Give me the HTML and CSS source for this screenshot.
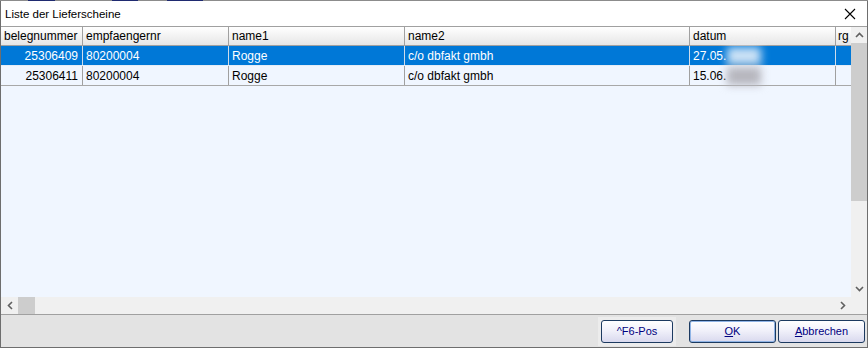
FILE: index.html
```html
<!DOCTYPE html>
<html lang="de">
<head>
    <meta charset="UTF-8">
    <meta name="viewport" content="width=device-width, initial-scale=1.0">
    <title>Liste der Lieferscheine</title>
    <link rel="stylesheet" href="styles.css">
</head>
<body>
    <div class="window">
        <div class="top-strip"></div>
        <div class="title-bar">
            <span class="title">Liste der Lieferscheine</span>
            <button class="close-btn" type="button" aria-label="Schließen">
                <svg width="12" height="12" viewBox="0 0 12 12">
                    <path d="M1 1 L11 11 M11 1 L1 11" stroke="#000" stroke-width="1.1" fill="none"/>
                </svg>
            </button>
        </div>

        <div class="grid-area">
            <div class="grid-main">
                <div class="table">
                    <div class="row header">
                        <div class="cell">belegnummer</div>
                        <div class="cell">empfaengernr</div>
                        <div class="cell">name1</div>
                        <div class="cell">name2</div>
                        <div class="cell">datum</div>
                        <div class="cell last">rg</div>
                    </div>
                    <div class="row selected">
                        <div class="cell num">25306409</div>
                        <div class="cell">80200004</div>
                        <div class="cell">Rogge</div>
                        <div class="cell">c/o dbfakt gmbh</div>
                        <div class="cell">27.05.<span class="blurred"></span></div>
                        <div class="cell last"></div>
                    </div>
                    <div class="row end">
                        <div class="cell num">25306411</div>
                        <div class="cell">80200004</div>
                        <div class="cell">Rogge</div>
                        <div class="cell">c/o dbfakt gmbh</div>
                        <div class="cell">15.06.<span class="blurred"></span></div>
                        <div class="cell last"></div>
                    </div>
                </div>
                <div class="vscroll">
                    <div class="arrow-btn">
                        <svg width="9" height="6" viewBox="0 0 9 6"><path d="M1 5 L4.5 1.5 L8 5" stroke="#606060" stroke-width="1.6" fill="none"/></svg>
                    </div>
                    <div class="vthumb"></div>
                    <div class="vtrack"></div>
                    <div class="arrow-btn">
                        <svg width="9" height="6" viewBox="0 0 9 6"><path d="M1 1 L4.5 4.5 L8 1" stroke="#606060" stroke-width="1.6" fill="none"/></svg>
                    </div>
                </div>
            </div>
            <div class="hscroll">
                <div class="arrow-btn h">
                    <svg width="6" height="9" viewBox="0 0 6 9"><path d="M5 1 L1.5 4.5 L5 8" stroke="#606060" stroke-width="1.6" fill="none"/></svg>
                </div>
                <div class="hthumb"></div>
                <div class="htrack"></div>
                <div class="arrow-btn h">
                    <svg width="6" height="9" viewBox="0 0 6 9"><path d="M1 1 L4.5 4.5 L1 8" stroke="#606060" stroke-width="1.6" fill="none"/></svg>
                </div>
                <div class="corner"></div>
            </div>
        </div>

        <div class="button-panel">
            <div class="btn-frame">
                <button class="btn" type="button">^F6-Pos</button>
            </div>
            <button class="btn default" type="button"><u>O</u>K</button>
            <button class="btn" type="button"><u>A</u>bbrechen</button>
        </div>
    </div>
</body>
</html>
```

FILE: styles.css
```css
body {
    margin: 0;
    padding: 0;
    background: #ffffff;
    font-family: "Liberation Sans", Arial, sans-serif;
}
.window {
    width: 868px;
    height: 348px;
    box-sizing: border-box;
    border: 1px solid #6e6e6e;
    border-top: none;
    display: flex;
    flex-direction: column;
    background: #ffffff;
}
.top-strip {
    height: 1px;
    margin: 0 -1px;
    background: linear-gradient(to right,
        #8c8c8c 0, #8c8c8c 28px, #1f2a70 28px, #1f2a70 55px,
        #8c8c8c 55px, #8c8c8c 112px, #1f2a70 112px, #1f2a70 138px,
        #8c8c8c 138px, #8c8c8c 167px, #1f2a70 167px, #1f2a70 203px,
        #8c8c8c 203px);
}
.title-bar {
    height: 25px;
    display: flex;
    align-items: center;
    justify-content: space-between;
    padding-left: 4px;
}
.title {
    font-size: 11.5px;
    color: #000;
}
.close-btn {
    width: 30px;
    height: 25px;
    margin-right: 2px;
    padding: 0;
    border: none;
    background: transparent;
    display: flex;
    align-items: center;
    justify-content: center;
}
.grid-area {
    border-top: 1px solid #a0a0a0;
    display: flex;
    flex-direction: column;
}
.grid-main {
    display: flex;
    height: 270px;
}
.table {
    width: 850px;
    overflow: hidden;
    background: #f0f6ff;
    font-size: 12px;
    color: #000;
}
.row {
    display: grid;
    grid-template-columns: 82px 146px 176px 285px 146px 15px;
    height: 20px;
    box-sizing: border-box;
    border-bottom: 1px solid #a8a8a8;
}
.row.header {
    height: 19px;
    background: linear-gradient(#ffffff, #e6e6e6);
    border-bottom-color: #a0a0a0;
}
.row.selected {
    background: #0078d7;
    color: #ffffff;
    border-bottom-color: #e4ecf6;
}
.cell {
    border-right: 1px solid #a0a0a0;
    padding: 0 3px;
    display: flex;
    align-items: center;
    white-space: nowrap;
    overflow: visible;
}
.row.selected .cell {
    border-right-color: #cfdcea;
}
.cell.num {
    justify-content: flex-end;
    padding-right: 4px;
}
.cell.last {
    border-right: none;
    padding: 0 2px;
    overflow: hidden;
}
.blurred {
    display: inline-block;
    width: 34px;
    height: 18px;
    margin-left: 1px;
    background: #b6b6be;
    filter: blur(4px);
}
.row.selected .blurred {
    background: #eef4fb;
    opacity: 0.85;
}
.vscroll {
    width: 16px;
    background: #f0f0f0;
    display: flex;
    flex-direction: column;
}
.arrow-btn {
    width: 16px;
    height: 16px;
    display: flex;
    align-items: center;
    justify-content: center;
    flex: none;
}
.arrow-btn.h {
    width: 17px;
    height: 17px;
}
.vthumb {
    height: 158px;
    background: #cdcdcd;
}
.vtrack {
    flex: 1;
}
.hscroll {
    height: 17px;
    display: flex;
    background: #f0f0f0;
}
.hthumb {
    width: 17px;
    background: #cdcdcd;
}
.htrack {
    flex: 1;
}
.corner {
    width: 16px;
}
.button-panel {
    flex: 1;
    border-top: 1px solid #a0a0a0;
    background: #e3e3e3;
    display: flex;
    align-items: center;
    justify-content: flex-end;
    padding-right: 2px;
    gap: 2px;
}
.btn-frame {
    padding: 3px;
    background: #ececec;
    margin-right: 11px;
    display: flex;
}
.btn {
    width: 87px;
    height: 23px;
    box-sizing: border-box;
    border: 1px solid #1c3a60;
    border-radius: 3px;
    background: linear-gradient(#ffffff, #f1f1fa 45%, #d9d9ee);
    color: #000080;
    font-family: "Liberation Sans", Arial, sans-serif;
    font-size: 11px;
    padding: 0;
}
.btn-frame .btn {
    width: 72px;
}
.btn.default {
    box-shadow: inset 0 0 0 1px #8fb4e6;
}
```
